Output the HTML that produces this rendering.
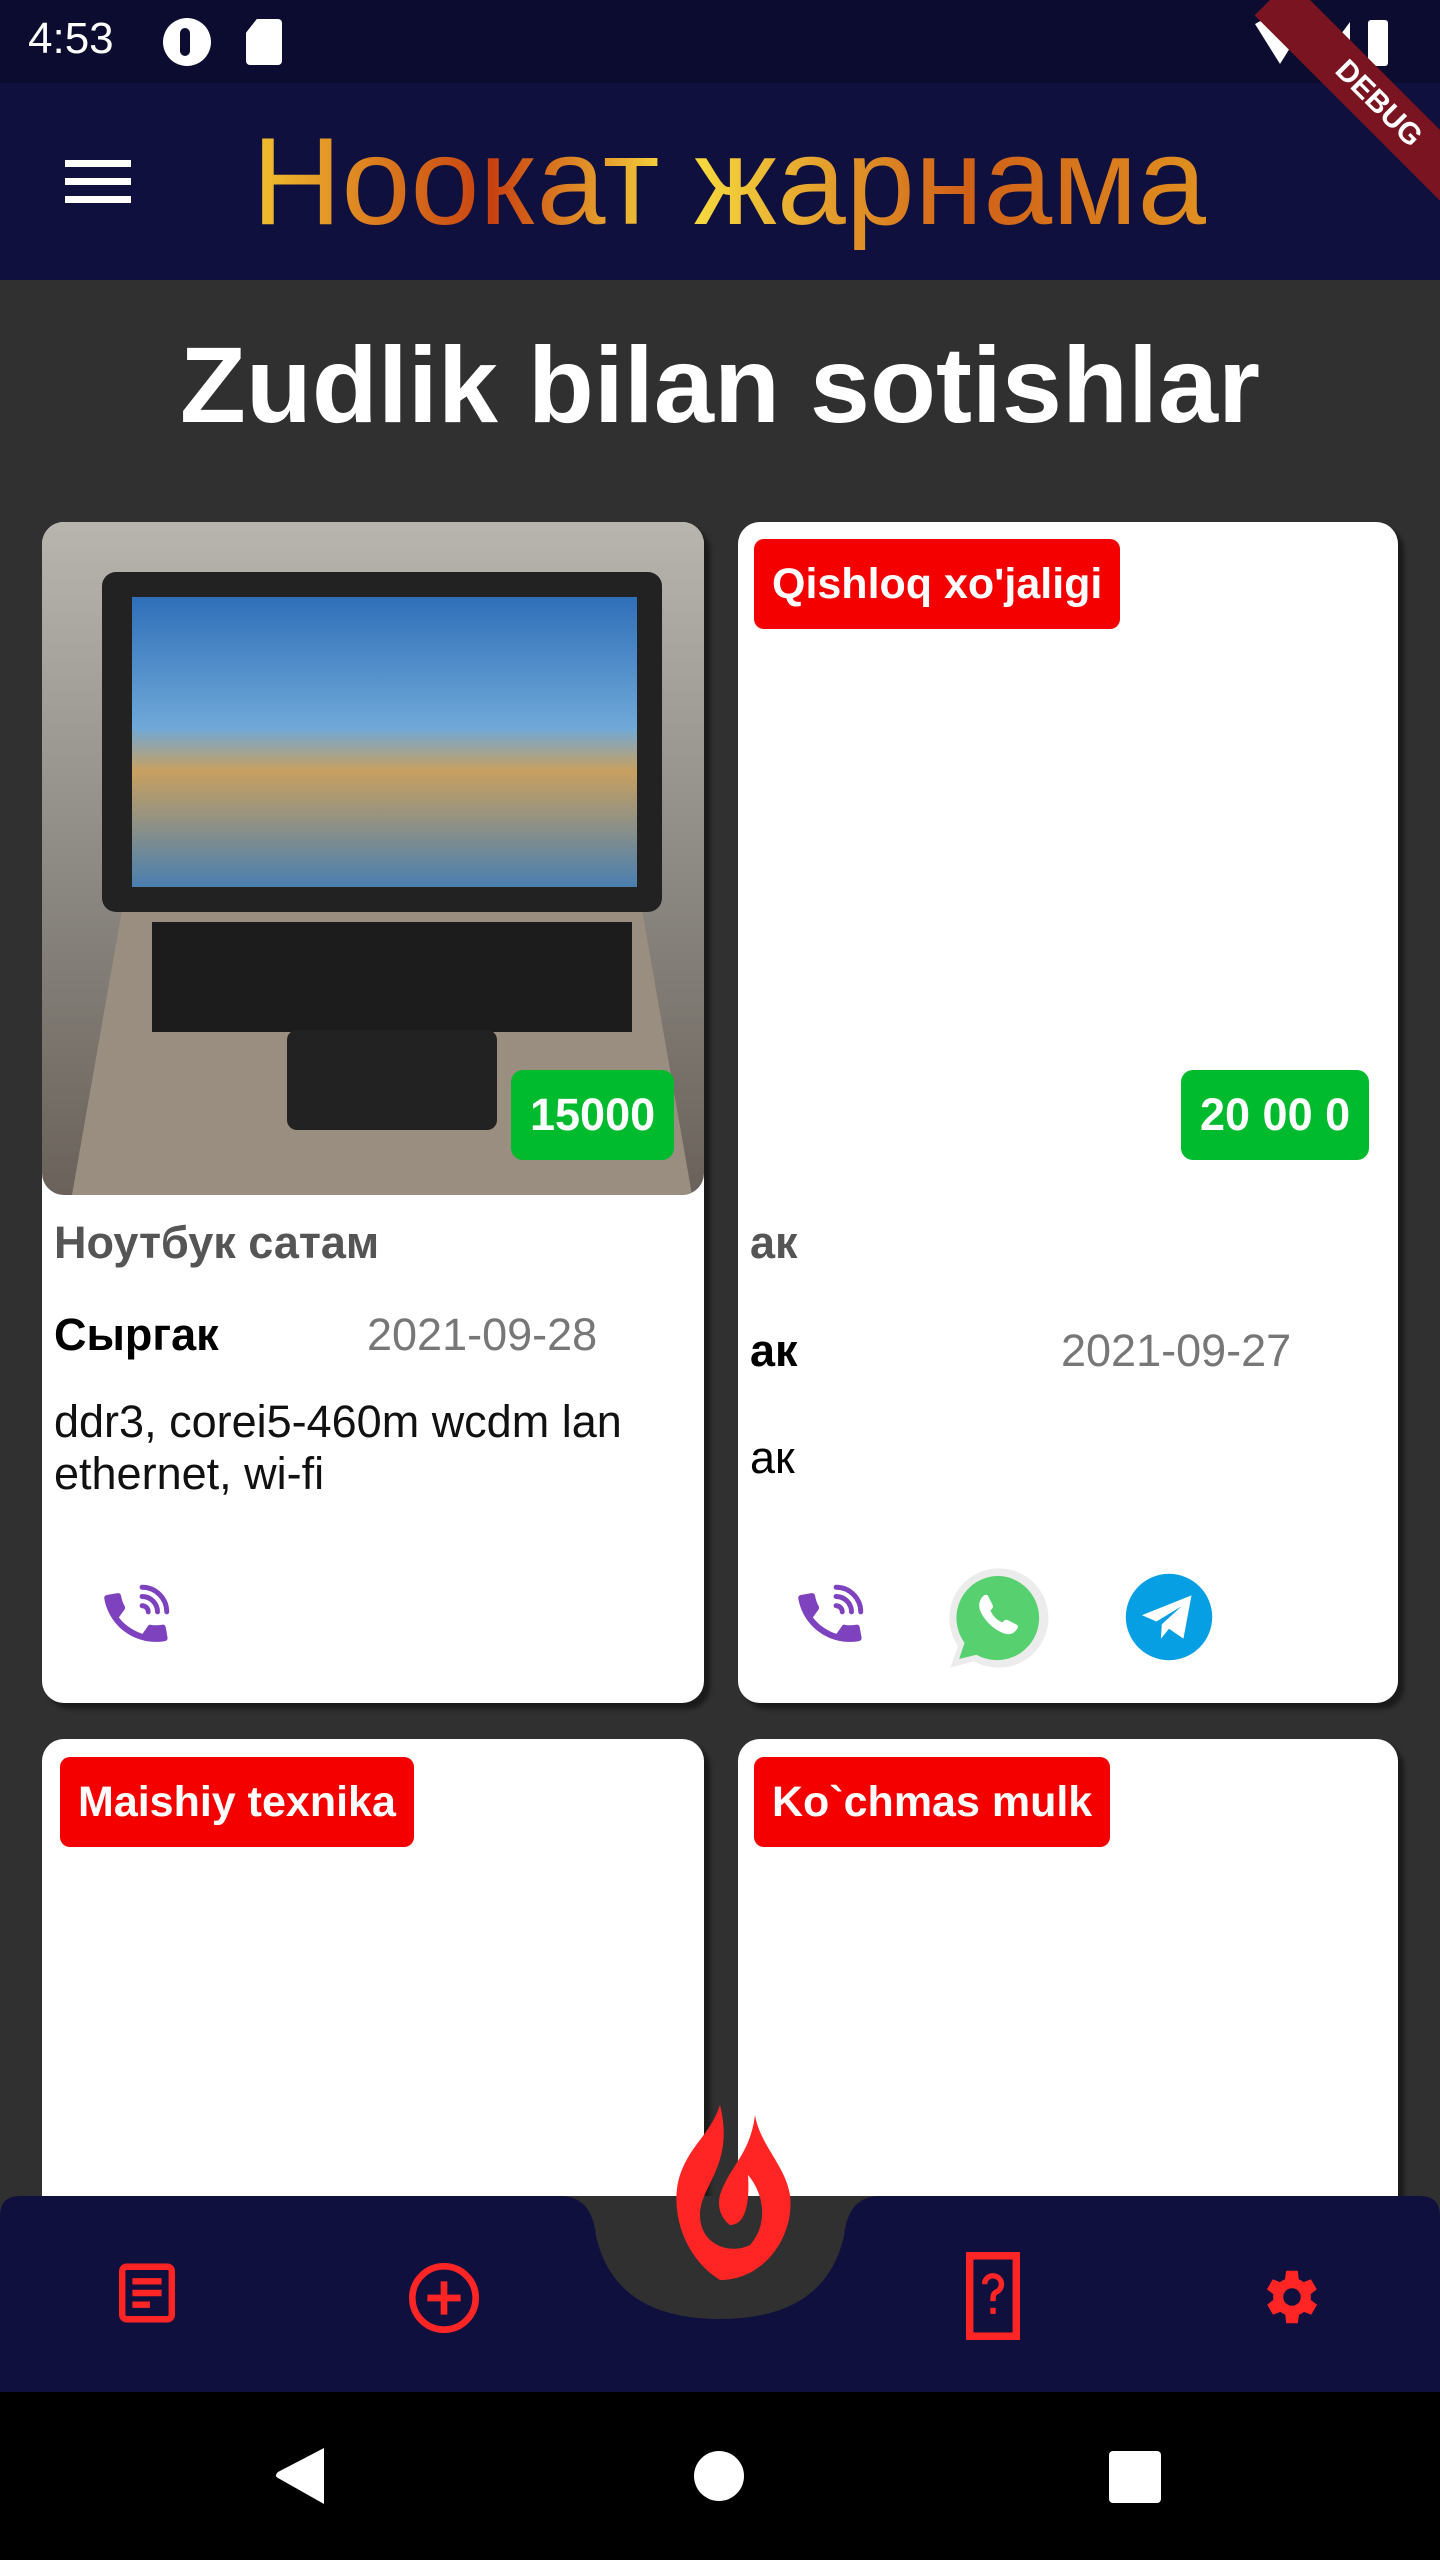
<!DOCTYPE html>
<html><head><meta charset="utf-8"><style>
*{margin:0;padding:0;box-sizing:border-box}
body{width:1440px;height:2560px;background:#303030;font-family:"Liberation Sans","DejaVu Sans",sans-serif;position:relative;overflow:hidden}
.abs{position:absolute}
.card{position:absolute;background:#fff;border-radius:22px;box-shadow:6px 6px 4px rgba(0,0,0,.45);overflow:hidden}
.badge{position:absolute;background:#f40000;color:#fff;font-size:43px;border-radius:10px;padding:0 18px;height:90px;line-height:90px;font-weight:bold}
.price{position:absolute;background:#00bb2d;color:#fff;font-size:45px;border-radius:12px;height:90px;line-height:90px;padding:0 19px;font-weight:bold}
.t{position:absolute;font-size:45px;white-space:nowrap}
</style></head><body>
<div class="abs" style="left:0;top:0;width:1440px;height:83px;background:#0c0c31"></div>
<div class="abs" style="left:28px;top:14px;color:#fff;font-size:44px">4:53</div>
<div class="abs" style="left:163px;top:18px;width:48px;height:48px;border-radius:50%;background:#fff"></div>
<div class="abs" style="left:180px;top:28px;width:10px;height:28px;background:#0c0c31;border-radius:5px"></div>
<div class="abs" style="left:246px;top:19px;width:36px;height:46px;background:#fff;border-radius:4px;clip-path:polygon(30% 0,100% 0,100% 100%,0 100%,0 30%)"></div>
<svg class="abs" style="left:1250px;top:14px" width="150" height="60"><path d="M5 10 Q30 -5 55 10 L30 50Z" fill="#fff"/><path d="M100 8 L100 48 L70 48Z" fill="#fff"/><rect x="118" y="6" width="20" height="46" rx="3" fill="#fff"/></svg>
<div class="abs" style="left:0;top:83px;width:1440px;height:197px;background:#10103f"></div>
<div class="abs" style="left:65px;top:160px;width:66px;height:7px;background:#fff;box-shadow:0 18px 0 #fff,0 36px 0 #fff"></div>
<div class="abs" style="left:252px;top:112px;font-size:124px;line-height:140px;font-weight:500;background:linear-gradient(90deg,#f0c030,#c84010 25%,#f8e040 45%,#d06018 75%,#e09020);-webkit-background-clip:text;background-clip:text;color:transparent">Ноокат жарнама</div>
<div class="abs" style="width:300px;height:50px;background:#7a1420;transform:rotate(45deg);transform-origin:0 0;color:#fff;font-size:30px;font-weight:bold;text-align:center;line-height:50px;left:1290px;top:-20px">DEBUG</div>
<div class="abs" style="left:0;top:322px;width:1440px;text-align:center;color:#fff;font-size:108px;font-weight:bold">Zudlik bilan sotishlar</div>

<div class="card" style="left:42px;top:522px;width:662px;height:1181px">
<div class="abs" style="left:0;top:0;width:662px;height:673px;border-radius:0 0 22px 22px;overflow:hidden;background:linear-gradient(180deg,#b8b4ae 0%,#8a8680 55%,#6a625a 100%)">
 <div class="abs" style="left:60px;top:50px;width:560px;height:340px;background:#222;border-radius:14px"></div>
 <div class="abs" style="left:90px;top:75px;width:505px;height:290px;background:linear-gradient(180deg,#2f6fb8,#6fa8d8 45%,#c8a060 60%,#4a7fb0)"></div>
 <div class="abs" style="left:30px;top:390px;width:620px;height:283px;background:#9a8e80;clip-path:polygon(8% 0,92% 0,100% 100%,0 100%)"></div>
 <div class="abs" style="left:110px;top:400px;width:480px;height:110px;background:#1c1c1c"></div>
 <div class="abs" style="left:245px;top:508px;width:210px;height:100px;background:#222;border-radius:10px"></div>
 <div class="price" style="left:469px;top:548px">15000</div>
</div>
<div class="t" style="left:12px;top:695px;color:#555;font-weight:bold">Ноутбук сатам</div>
<div class="t" style="left:12px;top:787px;color:#000;font-weight:bold">Сыргак</div>
<div class="t" style="left:325px;top:787px;color:#777">2021-09-28</div>
<div class="t" style="left:12px;top:874px;color:#111;line-height:52px">ddr3, corei5-460m wcdm lan<br>ethernet, wi-fi</div>
<svg class="abs" style="left:60px;top:1056px" width="74" height="74" viewBox="0 0 24 24"><path d="M6.6 10.8c1.4 2.8 3.8 5.1 6.6 6.6l2.2-2.2c.3-.3.7-.4 1-.2 1.1.4 2.3.6 3.6.6.6 0 1 .4 1 1V20c0 .6-.4 1-1 1C10.6 21 3 13.4 3 4c0-.6.4-1 1-1h3.5c.6 0 1 .4 1 1 0 1.3.2 2.5.6 3.6.1.3 0 .7-.2 1z" fill="#7e42bf" transform="translate(-1,1) rotate(-10 12 12)"/><path d="M13 3a8 8 0 0 1 8 8M13 6a5 5 0 0 1 5 5M13 9a2 2 0 0 1 2 2" stroke="#7e42bf" stroke-width="1.6" fill="none" stroke-linecap="round"/></svg>
</div>

<div class="card" style="left:738px;top:522px;width:660px;height:1181px">
<div class="badge" style="left:16px;top:17px">Qishloq xo'jaligi</div>
<div class="price" style="left:443px;top:548px">20 00 0</div>
<div class="t" style="left:12px;top:695px;color:#555;font-weight:bold">ак</div>
<div class="t" style="left:12px;top:803px;color:#000;font-weight:bold">ак</div>
<div class="t" style="left:323px;top:803px;color:#777">2021-09-27</div>
<div class="t" style="left:12px;top:910px;color:#000">ак</div>
<svg class="abs" style="left:58px;top:1056px" width="74" height="74" viewBox="0 0 24 24"><path d="M6.6 10.8c1.4 2.8 3.8 5.1 6.6 6.6l2.2-2.2c.3-.3.7-.4 1-.2 1.1.4 2.3.6 3.6.6.6 0 1 .4 1 1V20c0 .6-.4 1-1 1C10.6 21 3 13.4 3 4c0-.6.4-1 1-1h3.5c.6 0 1 .4 1 1 0 1.3.2 2.5.6 3.6.1.3 0 .7-.2 1z" fill="#7e42bf" transform="translate(-1,1) rotate(-10 12 12)"/><path d="M13 3a8 8 0 0 1 8 8M13 6a5 5 0 0 1 5 5M13 9a2 2 0 0 1 2 2" stroke="#7e42bf" stroke-width="1.6" fill="none" stroke-linecap="round"/></svg>
<svg class="abs" style="left:206px;top:1042px" width="108" height="108" viewBox="0 0 100 100"><path d="M50 4a46 46 0 1 1-22 86L6 96l7-20A46 46 0 0 1 50 4z" fill="#ececec"/><path d="M50 11a39 39 0 1 1-20 73l-16 4 5-15A39 39 0 0 1 50 11z" fill="#57d06f"/><path d="M36 30c2-2 4-2 5 0l4 8c1 2 0 3-2 5 2 5 6 9 11 11 2-2 3-3 5-2l8 4c2 1 2 3 0 5-3 4-7 5-12 3-10-4-18-12-22-22-1-5 0-9 3-12z" fill="#fff"/></svg>
<svg class="abs" style="left:386px;top:1050px" width="90" height="90" viewBox="0 0 100 100"><circle cx="50" cy="50" r="48" fill="#079fe4"/><path d="M20 48l55-22-9 48-16-11-9 11 1-16 22-20-28 17z" fill="#fff"/></svg>
</div>

<div class="card" style="left:42px;top:1739px;width:662px;height:700px"><div class="badge" style="left:18px;top:18px">Maishiy texnika</div></div>
<div class="card" style="left:738px;top:1739px;width:660px;height:700px"><div class="badge" style="left:16px;top:18px">Ko`chmas mulk</div></div>

<svg class="abs" style="left:0;top:2196px" width="1440" height="196"><path d="M0 20Q0 0 20 0H1420Q1440 0 1440 20V196H0Z" fill="#10103f"/><path d="M560 0Q592 0 596 40Q615 123 720 123Q825 123 844 40Q848 0 880 0Z" fill="#303030"/></svg>
<svg class="abs" style="left:650px;top:2105px" width="145" height="180" viewBox="0 0 145 180"><path d="M70 0C60 30 40 40 30 70 20 100 30 150 70 175 115 175 145 130 140 90 135 60 110 40 105 10 100 50 80 60 70 90 65 110 80 120 80 120 95 120 100 100 98 70 115 90 118 120 100 140 80 150 50 140 50 110 50 80 85 60 70 0Z" fill="#ff2525"/></svg>
<svg class="abs" style="left:112px;top:2258px" width="70" height="70" viewBox="0 0 24 24"><rect x="3.5" y="3" width="17" height="18" rx="1.5" fill="none" stroke="#ff2525" stroke-width="2.2"/><path d="M7 8h10M7 12h10M7 16h6" stroke="#ff2525" stroke-width="2.2"/></svg>
<svg class="abs" style="left:404px;top:2258px" width="80" height="80" viewBox="0 0 24 24"><circle cx="12" cy="12" r="9.5" fill="none" stroke="#ff2525" stroke-width="2"/><path d="M12 7v10M7 12h10" stroke="#ff2525" stroke-width="2"/></svg>
<svg class="abs" style="left:966px;top:2252px" width="54" height="88" viewBox="0 0 16 26"><rect x="1" y="1" width="14" height="24" fill="none" stroke="#ff2525" stroke-width="2.4"/><path d="M5.5 9.5a2.5 2.5 0 1 1 3.5 2.3c-1 .5-1 1.2-1 2.7" fill="none" stroke="#ff2525" stroke-width="1.6"/><rect x="7.2" y="16.5" width="1.6" height="1.8" fill="#ff2525"/></svg>
<svg class="abs" style="left:1257px;top:2262px" width="70" height="70" viewBox="0 0 24 24"><path d="M19.4 13a7.5 7.5 0 0 0 0-2l2.1-1.6-2-3.5-2.5 1a7 7 0 0 0-1.7-1L15 3h-4l-.4 2.9a7 7 0 0 0-1.7 1l-2.5-1-2 3.5L6.6 11a7.5 7.5 0 0 0 0 2l-2.1 1.6 2 3.5 2.5-1a7 7 0 0 0 1.7 1L11 21h4l.4-2.9a7 7 0 0 0 1.7-1l2.5 1 2-3.5z" fill="#ff2525" transform="translate(-1,0)"/><circle cx="12" cy="12" r="3" fill="#10103f"/></svg>
<div class="abs" style="left:0;top:2392px;width:1440px;height:168px;background:#000"></div>
<svg class="abs" style="left:272px;top:2446px" width="60" height="60"><path d="M52 2V58L6 32Q2 30 6 26Z" fill="#fff"/></svg>
<div class="abs" style="left:694px;top:2451px;width:50px;height:50px;border-radius:50%;background:#fff"></div>
<div class="abs" style="left:1109px;top:2451px;width:52px;height:52px;border-radius:4px;background:#fff"></div>
</body></html>
